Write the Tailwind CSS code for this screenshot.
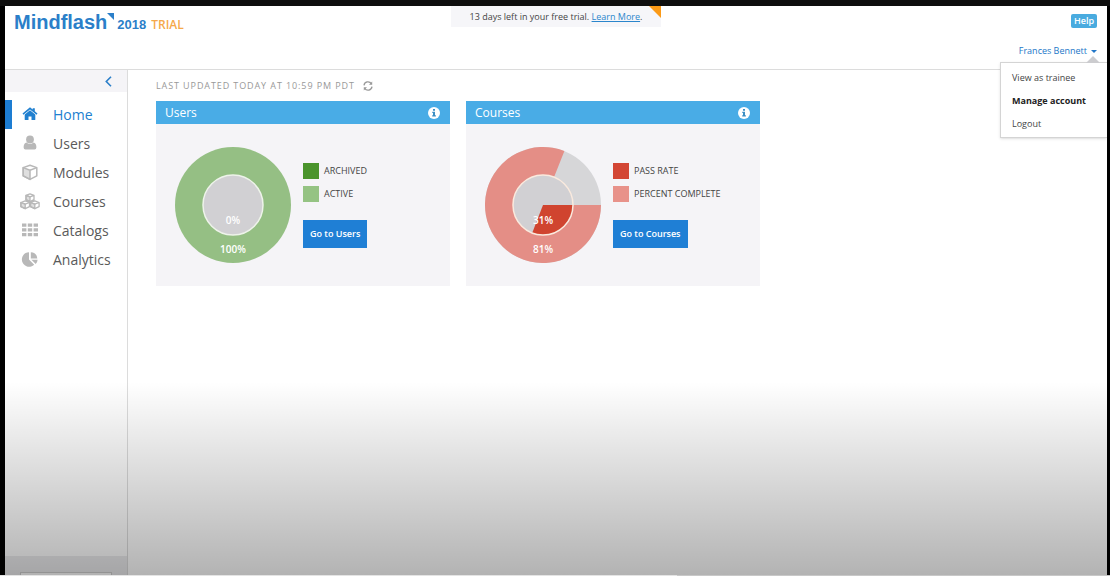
<!DOCTYPE html>
<html lang="en">
<head>
    <meta charset="UTF-8">
    <meta name="viewport" content="width=device-width, initial-scale=1.0">
    <title>Mindflash - Home</title>
    <script src="https://cdn.jsdelivr.net/npm/@tailwindcss/browser@4"></script>
</head>
<body class="bg-black font-['Open_Sans',sans-serif] text-[#444]">
    <div class="relative flex flex-col h-screen overflow-hidden border-t-6 border-t-[#0e0e0e] pl-[5px] pr-[3px]">

        <header class="relative flex h-16 shrink-0 justify-between border-b border-[#dcdcdc] bg-white">
            <a href="#" class="flex h-8 items-baseline pl-[9px] text-[#2b7fc9]">
                <span class="font-['Liberation_Sans',sans-serif] text-[20px] leading-8 font-bold">Mindflash</span>
                <svg class="size-[7px] self-start mt-[7px]" viewBox="0 0 8 8" fill="currentColor"><path d="M0 0h8v8z"/></svg>
                <span class="ml-[3px] font-['Liberation_Sans',sans-serif] text-[13px] font-bold">2018</span>
                <span class="ml-[5px] text-[12px] font-semibold text-[#f5a94a]">TRIAL</span>
            </a>

            <!-- trial notice -->
            <div class="absolute left-1/2 top-0 h-[21px] w-[210px] -translate-x-1/2 bg-[#f6f6f9] text-center text-[9px] leading-[22px]">
                13 days left in your free trial. <a href="#" class="text-[#2b86cc] underline">Learn More</a>.
                <svg class="absolute right-0 top-0 size-3" viewBox="0 0 12 12" fill="#fb9a17"><path d="M0 0h12v12z"/></svg>
            </div>

            <div class="flex flex-col items-end pr-[10px] pt-2">
                <button type="button" class="h-[14px] w-[26px] rounded-xs bg-[#49abdf] text-[9px] leading-3 font-semibold text-white">Help</button>
                <button type="button" class="mt-4 flex items-center gap-1 text-[9px] leading-[14px] text-[#2277c8]">
                    Frances Bennett
                    <svg class="h-[3px] w-[6px]" viewBox="0 0 6 3" fill="currentColor"><path d="M0 0h6L3 3z"/></svg>
                </button>
            </div>

            <nav class="absolute right-0 top-14 z-10 flex h-[76px] w-[107px] flex-col justify-center border border-r-0 border-[#d4d4d4] bg-white pl-[11px] text-[9px] leading-[23px] shadow-sm">
                <svg class="absolute right-[7px] -top-[7px] h-[7px] w-[14px]" viewBox="0 0 14 7" fill="#cccccf"><path d="M7 0l7 7H0z"/></svg>
                <a href="#">View as trainee</a>
                <a href="#" class="font-bold text-[#222]">Manage account</a>
                <a href="#">Logout</a>
            </nav>
        </header>

        <div class="flex flex-1 bg-white">
            <aside class="flex w-[123px] shrink-0 flex-col border-r border-[#dcdcdc]">
                <div class="flex h-[22px] items-center justify-end bg-[#f5f4f7] pr-[15px]">
                    <button type="button" aria-label="Collapse menu" class="text-[#2b7fc9]">
                        <svg class="h-[11px] w-[7px]" viewBox="0 0 7 11" fill="none" stroke="currentColor" stroke-width="1.6"><path d="M6 .8L1.3 5.5 6 10.2"/></svg>
                    </button>
                </div>
                <nav class="mt-2 flex flex-col text-[14px] text-[#5a5a5a]">
                    <a href="#" class="flex h-[29px] items-center gap-[13px] border-l-[7px] border-[#1d7dd2] pl-[8px] text-[#2180d0]">
                        <svg class="size-5" viewBox="0 0 20 20" fill="currentColor"><path d="M10 5.200l5.300 4.400v4.900q0 .6-.6.6h-3.200v-3.600H8.500v3.600H5.300q-.6 0-.6-.6V9.600z"/><path d="M10 2.200l2.700 2.300V3.200h2.100v3.100l2.700 2.300-.9 1.200L10 4.400 3.400 9.800l-.9-1.200z"/></svg>
                        Home
                    </a>
                    <a href="#" class="flex h-[29px] items-center gap-[13px] pl-[15px]">
                        <svg class="size-5 text-[#b8b8b8]" viewBox="0 0 20 20" fill="currentColor"><circle cx="10" cy="5.500" r="3.900"/><path d="M6.600 8.600Q10 11.600 13.400 8.600q3 .8 3 4.700 0 2.300-1.800 2.300H5.400q-1.800 0-1.800-2.300 0-3.900 3-4.700z"/></svg>
                        Users
                    </a>
                    <a href="#" class="flex h-[29px] items-center gap-[13px] pl-[15px]">
                        <svg class="size-5 text-[#b8b8b8]" viewBox="0 0 20 20" fill="none" stroke="currentColor" stroke-width="1.500" stroke-linejoin="round"><path d="M10 2.200l6.800 2.400v8.200L10 16.400l-6.800-3.600V4.600z"/><path d="M3.200 4.600L10 7.200v9.200l-6.800-3.600z" fill="currentColor" fill-opacity=".45"/><path d="M10 7.200l6.800-2.600"/></svg>
                        Modules
                    </a>
                    <a href="#" class="flex h-[29px] items-center gap-[13px] pl-[15px]">
                        <svg class="size-5 text-[#b8b8b8]" viewBox="0 0 20 20" fill="none" stroke="currentColor" stroke-width="1.300" stroke-linejoin="round"><path d="M10 1.800l4 1.500v4.400l-4 1.900-4-1.900V3.300zM6 3.300l4 1.600 4-1.600M5.200 8.800l4.300 1.700v4.200l-4.300 2-4.300-2v-4.200zM.9 10.500l4.300 1.600 4.300-1.600M14.800 8.800l4.300 1.700v4.200l-4.300 2-4.300-2v-4.200zM10.500 10.500l4.300 1.600 4.300-1.600"/><path d="M10 4.900v4.700L6 7.700V3.300zM5.200 12.100v4.600l-4.300-2v-4.200zM14.800 12.100v4.600l-4.300-2v-4.200z" fill="currentColor" fill-opacity=".45"/></svg>
                        Courses
                    </a>
                    <a href="#" class="flex h-[29px] items-center gap-[13px] pl-[15px]">
                        <svg class="size-5 text-[#b8b8b8]" viewBox="0 0 20 20" fill="currentColor"><path d="M2 2.500h4.400v3.200H2zM7.800 2.500h4.400v3.200H7.800zM13.600 2.500H18v3.200h-4.400zM2 7.300h4.400v3.200H2zM7.800 7.300h4.400v3.200H7.800zM13.600 7.300H18v3.200h-4.400zM2 12.100h4.400v3.200H2zM7.800 12.100h4.400v3.200H7.800zM13.600 12.100H18v3.200h-4.400z"/></svg>
                        Catalogs
                    </a>
                    <a href="#" class="flex h-[29px] items-center gap-[13px] pl-[15px]">
                        <svg class="size-5 text-[#b8b8b8]" viewBox="0 0 20 20" fill="currentColor"><path d="M9 2.200v7.400l5.200 5.200A7.300 7.300 0 1 1 9 2.200z"/><path d="M10.800 2.200a7 7 0 0 1 6.500 6.200h-6.500z"/><path d="M11.400 9.700h6.200a7 7 0 0 1-1.900 4.300z"/></svg>
                        Analytics
                    </a>
                </nav>
                <div class="mt-auto h-5 bg-[#ececee] px-[15px] pt-4">
                    <div class="h-1 border border-b-0 border-[#d0d0d0] bg-white"></div>
                </div>
            </aside>

            <main class="flex-1 pl-7">
                <div class="flex h-[31px] items-center gap-2 text-[9px] tracking-widest text-[#999]">
                    LAST UPDATED TODAY AT 10:59 PM PDT
                    <button type="button" aria-label="Refresh">
                        <svg class="size-[10px]" viewBox="0 0 10 10" fill="none" stroke="currentColor" stroke-width="1.300"><path d="M1 4.300A4 4 0 0 1 8.300 2.600M9 5.700A4 4 0 0 1 1.700 7.400"/><path d="M9.200.6v3.200H6zM.8 9.400V6.200H4z" fill="currentColor" stroke="none"/></svg>
                    </button>
                </div>

                <div class="flex flex-wrap gap-4">
                    <section class="w-[294px] bg-[#f5f4f7]">
                        <div class="flex h-[23px] items-center justify-between bg-[#49ace6] px-[9px] text-white">
                            <h2 class="text-[12px]">Users</h2>
                            <svg class="mr-px size-3" viewBox="0 0 12 12"><circle cx="6" cy="6" r="6" fill="#fff"/><path d="M5 2h2v1.700H5zM4.300 4.700H7v3.500h.9v1.400H4.200V8.200H5V6h-.7z" fill="#3c8fc4"/></svg>
                        </div>
                        <div class="flex h-[162px] items-center gap-3 pl-[19px]">
                            <svg class="size-[116px]" viewBox="0 0 116 116" font-size="10" font-weight="600" text-anchor="middle" fill="#fff">
                                <circle cx="58" cy="58" r="58" fill="#95bf84"/>
                                <circle cx="58" cy="58" r="30" fill="#d1d0d3" stroke="#eef3ea" stroke-width="1.500"/>
                                <text x="58" y="77">0%</text>
                                <text x="58" y="106">100%</text>
                            </svg>
                            <div class="flex flex-col items-start text-[9px]">
                                <div class="flex items-center gap-[5px]"><span class="size-4 bg-[#4a942c]"></span>ARCHIVED</div>
                                <div class="mt-[7px] flex items-center gap-[5px]"><span class="size-4 bg-[#95c383]"></span>ACTIVE</div>
                                <a href="#" class="mt-[18px] h-7 bg-[#1f7fd5] px-[7px] text-[9px] leading-7 font-semibold text-white">Go to Users</a>
                            </div>
                        </div>
                    </section>

                    <section class="w-[294px] bg-[#f5f4f7]">
                        <div class="flex h-[23px] items-center justify-between bg-[#49ace6] px-[9px] text-white">
                            <h2 class="text-[12px]">Courses</h2>
                            <svg class="mr-px size-3" viewBox="0 0 12 12"><circle cx="6" cy="6" r="6" fill="#fff"/><path d="M5 2h2v1.700H5zM4.300 4.700H7v3.500h.9v1.400H4.200V8.200H5V6h-.7z" fill="#3c8fc4"/></svg>
                        </div>
                        <div class="flex h-[162px] items-center gap-3 pl-[19px]">
                            <svg class="size-[116px]" viewBox="0 0 116 116" font-size="10" font-weight="600" text-anchor="middle" fill="#fff">
                                <circle cx="58" cy="58" r="58" fill="#d6d6d8"/>
                                <path d="M58 58H116A58 58 0 1 1 79.400 4.100z" fill="#e48e86"/>
                                <circle cx="58" cy="58" r="30" fill="#d1d0d3"/>
                                <path d="M58 58H88A30 30 0 0 1 47.200 86z" fill="#d0442f"/>
                                <circle cx="58" cy="58" r="30" fill="none" stroke="#faeade" stroke-width="1.500"/>
                                <text x="58" y="77">31%</text>
                                <text x="58" y="106">81%</text>
                            </svg>
                            <div class="flex flex-col items-start text-[9px]">
                                <div class="flex items-center gap-[5px]"><span class="size-4 bg-[#d34634]"></span>PASS RATE</div>
                                <div class="mt-[7px] flex items-center gap-[5px]"><span class="size-4 bg-[#e8928a]"></span>PERCENT COMPLETE</div>
                                <a href="#" class="mt-[18px] h-7 bg-[#1f7fd5] px-[7px] text-[9px] leading-7 font-semibold text-white">Go to Courses</a>
                            </div>
                        </div>
                    </section>
                </div>
            </main>
        </div>

        <!-- player shade and progress line -->
        <div class="pointer-events-none absolute inset-x-0 bottom-0 h-[34%] bg-linear-to-b from-black/0 to-black/30"></div>
        <div class="absolute inset-x-0 bottom-0 flex h-px bg-[#c8c8c8]">
            <div class="w-[61%] bg-[#e4e4e4]"></div>
        </div>
    </div>
</body>
</html>
